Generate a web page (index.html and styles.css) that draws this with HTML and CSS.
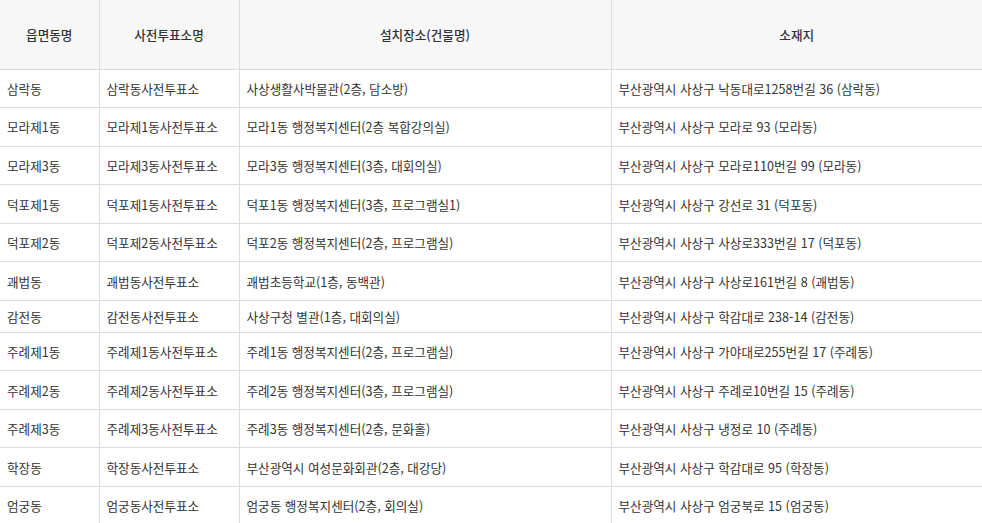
FILE: index.html
```html
<!DOCTYPE html>
<html lang="ko">
<head>
<meta charset="utf-8">
<link rel="stylesheet" href="styles.css">
</head>
<body>
<table class="vote-table">
  <colgroup>
    <col class="c1"><col class="c2"><col class="c3"><col class="c4">
  </colgroup>
  <thead>
    <tr><th>읍면동명</th><th>사전투표소명</th><th>설치장소(건물명)</th><th>소재지</th></tr>
  </thead>
  <tbody>
    <tr><td>삼락동</td><td>삼락동사전투표소</td><td>사상생활사박물관(2층, 담소방)</td><td>부산광역시 사상구 낙동대로1258번길 36 (삼락동)</td></tr>
    <tr><td>모라제1동</td><td>모라제1동사전투표소</td><td>모라1동 행정복지센터(2층 복합강의실)</td><td>부산광역시 사상구 모라로 93 (모라동)</td></tr>
    <tr><td>모라제3동</td><td>모라제3동사전투표소</td><td>모라3동 행정복지센터(3층, 대회의실)</td><td>부산광역시 사상구 모라로110번길 99 (모라동)</td></tr>
    <tr><td>덕포제1동</td><td>덕포제1동사전투표소</td><td>덕포1동 행정복지센터(3층, 프로그램실1)</td><td>부산광역시 사상구 강선로 31 (덕포동)</td></tr>
    <tr><td>덕포제2동</td><td>덕포제2동사전투표소</td><td>덕포2동 행정복지센터(2층, 프로그램실)</td><td>부산광역시 사상구 사상로333번길 17 (덕포동)</td></tr>
    <tr><td>괘법동</td><td>괘법동사전투표소</td><td>괘법초등학교(1층, 동백관)</td><td>부산광역시 사상구 사상로161번길 8 (괘법동)</td></tr>
    <tr class="short"><td>감전동</td><td>감전동사전투표소</td><td>사상구청 별관(1층, 대회의실)</td><td>부산광역시 사상구 학감대로 238-14 (감전동)</td></tr>
    <tr><td>주례제1동</td><td>주례제1동사전투표소</td><td>주례1동 행정복지센터(2층, 프로그램실)</td><td>부산광역시 사상구 가야대로255번길 17 (주례동)</td></tr>
    <tr><td>주례제2동</td><td>주례제2동사전투표소</td><td>주례2동 행정복지센터(3층, 프로그램실)</td><td>부산광역시 사상구 주례로10번길 15 (주례동)</td></tr>
    <tr><td>주례제3동</td><td>주례제3동사전투표소</td><td>주례3동 행정복지센터(2층, 문화홀)</td><td>부산광역시 사상구 냉정로 10 (주례동)</td></tr>
    <tr><td>학장동</td><td>학장동사전투표소</td><td>부산광역시 여성문화회관(2층, 대강당)</td><td>부산광역시 사상구 학감대로 95 (학장동)</td></tr>
    <tr><td>엄궁동</td><td>엄궁동사전투표소</td><td>엄궁동 행정복지센터(2층, 회의실)</td><td>부산광역시 사상구 엄궁북로 15 (엄궁동)</td></tr>
  </tbody>
</table>
</body>
</html>
```

FILE: styles.css
```css
html, body {
  margin: 0;
  padding: 0;
  background: #fff;
}
body {
  font-family: "Noto Sans CJK KR", "Noto Sans", sans-serif;
  font-size: 12.6px;
  color: #333;
}
.vote-table {
  width: 982px;
  border-collapse: collapse;
  table-layout: fixed;
}
.c1 { width: 99px; }
.c2 { width: 140px; }
.c3 { width: 372px; }
.c4 { width: 371px; }
.vote-table th {
  background: #f7f7f7;
  font-weight: 500;
  color: #333;
  height: 68.5px;
  padding: 0;
  text-align: center;
  border-left: 1px solid #ddd;
  border-bottom: 1px solid #ddd;
}
.vote-table td {
  height: 37.6px;
  padding: 0 7px;
  text-align: left;
  white-space: nowrap;
  border-left: 1px solid #ddd;
  border-bottom: 1px solid #ddd;
}
.vote-table tr > :first-child { border-left: none; }
.vote-table tr.short td { height: 30.6px; }
```
